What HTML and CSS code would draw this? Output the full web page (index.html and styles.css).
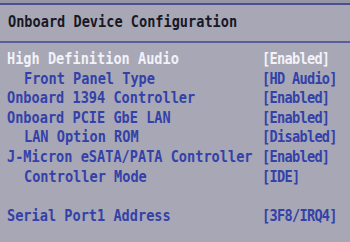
FILE: index.html
```html
<!DOCTYPE html>
<html>
<head>
<meta charset="utf-8">
<link rel="stylesheet" href="styles.css">
</head>
<body>
<div class="screen">
  <div class="band"></div>
  <div class="rule"></div>
  <div class="title"><span class="t">Onboard Device Configuration</span></div>
  <div class="rule rule2"></div>
  <div class="list">
    <div class="row sel"><span class="lbl t">High Definition Audio</span><span class="val t">[Enabled]</span></div>
    <div class="row sub"><span class="lbl t">Front Panel Type</span><span class="val t">[HD Audio]</span></div>
    <div class="row"><span class="lbl t">Onboard 1394 Controller</span><span class="val t">[Enabled]</span></div>
    <div class="row"><span class="lbl t">Onboard PCIE GbE LAN</span><span class="val t">[Enabled]</span></div>
    <div class="row sub"><span class="lbl t">LAN Option ROM</span><span class="val t">[Disabled]</span></div>
    <div class="row"><span class="lbl t">J-Micron eSATA/PATA Controller</span><span class="val t">[Enabled]</span></div>
    <div class="row sub"><span class="lbl t">Controller Mode</span><span class="val t">[IDE]</span></div>
    <div class="row empty"></div>
    <div class="row"><span class="lbl t">Serial Port1 Address</span><span class="val t">[3F8/IRQ4]</span></div>
  </div>
</div>
</body>
</html>
```

FILE: styles.css
```css
html, body {
  margin: 0;
  padding: 0;
  background: #a7a7b6;
}
.screen {
  width: 350px;
  height: 242px;
  overflow: hidden;
  background: #a7a7b6;
  font-family: "DejaVu Sans Mono", "Liberation Mono", monospace;
  font-size: 13.6px;
  font-weight: bold;
  color: #3341a8;
}
.band {
  height: 3px;
  background: #9696a6;
}
.rule {
  height: 2px;
  background: #4b4f90;
}
.rule2 {
  background: #5a5e98;
}
.title {
  height: 36px;
  box-sizing: border-box;
  padding: 6px 0 0 8px;
  line-height: 20px;
  color: #181824;
}
.t {
  display: inline-block;
  transform: scaleY(1.2);
  transform-origin: 50% 55%;
}
.list {
  padding-top: 6px;
}
.row {
  display: grid;
  grid-template-columns: 255px auto;
  height: 19.6px;
  line-height: 19.6px;
  padding-left: 7px;
  white-space: nowrap;
}
.row.sub .lbl {
  padding-left: 17px;
}
.val {
  letter-spacing: -0.7px;
}
.row.sel {
  color: #f2f2f8;
}
```
